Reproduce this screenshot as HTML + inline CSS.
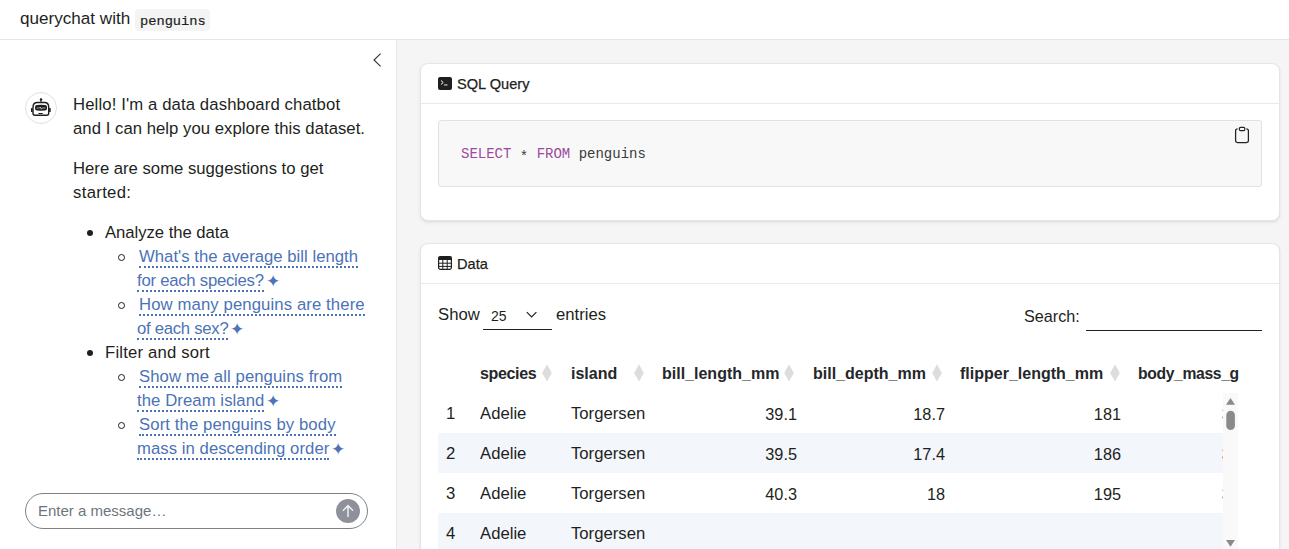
<!DOCTYPE html>
<html><head><meta charset="utf-8">
<style>
*{box-sizing:border-box;margin:0;padding:0}
html,body{width:1289px;height:549px;overflow:hidden;background:#fff;font-family:"Liberation Sans",sans-serif;color:#1d1f21}
.abs{position:absolute;white-space:nowrap}
#hdr{position:absolute;left:0;top:0;width:1289px;height:40px;border-bottom:1px solid #e4e6e8;background:#fff}
#side{position:absolute;left:0;top:40px;width:397px;height:509px;background:#fff;border-right:1px solid #e4e6e8}
#main{position:absolute;left:397px;top:40px;width:892px;height:509px;background:#f5f5f5}
.card{position:absolute;background:#fff;border:1px solid #e6e6e6;border-radius:8px;box-shadow:0 1px 2px rgba(0,0,0,.06),0 2px 4px rgba(0,0,0,.05)}
.t{font-size:16.7px;line-height:24px}
a.l{color:#4b73b6;text-decoration:none;border-bottom:2px dotted #4b73b6}
.spark{color:#4b73b6;font-size:16.5px;line-height:0;margin-left:2px;position:relative;top:1px}
.mono{font-family:"Liberation Mono",monospace}
.ch{font-size:14.6px;line-height:20px;-webkit-text-stroke:0.25px #1d1f21}
.th{font-size:16px;font-weight:bold;line-height:20px;color:#25272a}
.td{font-size:16.7px;line-height:20px}
.num{font-size:16.3px}
.sort{position:absolute;width:8px;height:16px}
.stripe{position:absolute;left:17px;width:785px;height:40px;background:#f3f6fb}
.r{text-align:right}
.inner{position:absolute;left:1px;top:1px;right:0;bottom:0}
</style></head><body>
<div id="hdr">
  <div class="abs" style="left:20px;top:9px;font-size:17.1px;line-height:20px">querychat with</div>
  <div class="abs" style="left:135px;top:9px;width:75px;height:22px;background:#f4f4f5;border-radius:4px"></div>
  <div class="abs mono" style="left:140px;top:12px;font-size:13.7px;line-height:20px;-webkit-text-stroke:0.2px #1d1f21">penguins</div>
</div>
<div id="side">
  <svg class="abs" style="left:370px;top:10px" width="14" height="20" viewBox="370 50 14 20"><path d="M380.6 53.6 L374 60 L380.6 66.4" fill="none" stroke="#333" stroke-width="1.1"/></svg>
  <div class="abs" style="left:25px;top:52px;width:32px;height:32px;border-radius:50%;border:1px solid #dde2e8"></div>
  <svg class="abs" style="left:28px;top:55px" width="26" height="25" viewBox="28 95 26 25">
    <circle cx="41" cy="99.4" r="1.25" fill="#1d1f21"/>
    <rect x="40.45" y="99.8" width="1.1" height="2.4" fill="#1d1f21"/>
    <path d="M33 107 Q33 102.5 37.5 102.5 L44.5 102.5 Q48.7 102.5 48.7 107 L48.7 113.3 Q48.7 115.3 46.7 115.3 L35 115.3 Q33 115.3 33 113.3 Z" fill="none" stroke="#1d1f21" stroke-width="1.4"/>
    <rect x="31" y="108.1" width="1.6" height="3.8" rx=".5" fill="#1d1f21"/>
    <rect x="49.1" y="108.1" width="1.6" height="3.8" rx=".5" fill="#1d1f21"/>
    <path d="M35 107 Q35 105 37 104.9 Q41 104.6 45 104.9 Q47 105 47 107 L47 108.4 Q47 110.4 45 110.5 Q41 110.8 37 110.5 Q35 110.4 35 108.4 Z" fill="#1d1f21"/>
    <path d="M36.5 108 L39.6 108 L40.4 107 L41.2 109.2 L42 108 L45.5 108" fill="none" stroke="#fff" stroke-width=".6"/>
    <rect x="38.3" y="112.9" width="4.6" height="1.1" rx=".5" fill="#1d1f21"/>
  </svg>
  <div class="abs t" style="left:73px;top:53px"><span style="letter-spacing:0.121px">Hello! I'm a data dashboard chatbot</span></div>
  <div class="abs t" style="left:73px;top:77px"><span style="letter-spacing:0.041px">and I can help you explore this dataset.</span></div>
  <div class="abs t" style="left:73px;top:117px"><span style="letter-spacing:-0.003px">Here are some suggestions to get</span></div>
  <div class="abs t" style="left:73px;top:141px"><span style="letter-spacing:0.329px">started:</span></div>
  <div class="abs" style="left:87px;top:190px;width:6px;height:6px;border-radius:50%;background:#1d1f21"></div>
  <div class="abs t" style="left:105px;top:181px"><span style="letter-spacing:-0.04px">Analyze the data</span></div>
  <div class="abs" style="left:118px;top:214px;width:7px;height:7px;border-radius:50%;border:1.2px solid #1d1f21"></div>
  <div class="abs t" style="left:139px;top:205px"><a class="l" style="letter-spacing:0.021px">What's the average bill length</a></div>
  <div class="abs t" style="left:137px;top:229px"><a class="l" style="letter-spacing:-0.238px">for each species?</a><span class="spark">✦</span></div>
  <div class="abs" style="left:118px;top:262px;width:7px;height:7px;border-radius:50%;border:1.2px solid #1d1f21"></div>
  <div class="abs t" style="left:139px;top:253px"><a class="l" style="letter-spacing:0.115px">How many penguins are there</a></div>
  <div class="abs t" style="left:137px;top:277px"><a class="l" style="letter-spacing:-0.264px">of each sex?</a><span class="spark">✦</span></div>
  <div class="abs" style="left:87px;top:310px;width:6px;height:6px;border-radius:50%;background:#1d1f21"></div>
  <div class="abs t" style="left:105px;top:301px"><span style="letter-spacing:0.193px">Filter and sort</span></div>
  <div class="abs" style="left:118px;top:334px;width:7px;height:7px;border-radius:50%;border:1.2px solid #1d1f21"></div>
  <div class="abs t" style="left:139px;top:325px"><a class="l" style="letter-spacing:0.083px">Show me all penguins from</a></div>
  <div class="abs t" style="left:137px;top:349px"><a class="l" style="letter-spacing:0.08px">the Dream island</a><span class="spark">✦</span></div>
  <div class="abs" style="left:118px;top:382px;width:7px;height:7px;border-radius:50%;border:1.2px solid #1d1f21"></div>
  <div class="abs t" style="left:139px;top:373px"><a class="l" style="letter-spacing:0.108px">Sort the penguins by body</a></div>
  <div class="abs t" style="left:137px;top:397px"><a class="l" style="letter-spacing:0.052px">mass in descending order</a><span class="spark">✦</span></div>
  <div class="abs" style="left:25px;top:453px;width:343px;height:36px;border:1px solid #7b8089;border-radius:18px"></div>
  <div class="abs t" style="left:38px;top:459px;color:#6c757d;font-size:15px">Enter a message…</div>
  <div class="abs" style="left:336px;top:459px;width:24px;height:24px;border-radius:50%;background:#8e9199"></div>
  <svg class="abs" style="left:336px;top:459px" width="24" height="24" viewBox="336 499 24 24"><path d="M348 517 L348 506 M342.9 510.8 L348 505.6 L353.1 510.8" fill="none" stroke="#eceef0" stroke-width="1.5"/></svg>
</div>
<div id="main">
  <!-- card 1 -->
  <div class="card" style="left:23px;top:23px;width:860px;height:158px"><div class="inner">
    <div class="abs" style="left:-1px;top:38px;width:858px;height:1px;background:#e8e9eb"></div>
    <svg class="abs" style="left:16px;top:12px" width="14" height="13" viewBox="0 0 14 13"><rect x="0" y="0" width="14" height="13" rx="2" fill="#1d1f21"/><path d="M3 3.5 L5.2 5.5 L3 7.5" fill="none" stroke="#fff" stroke-width="1"/><rect x="6" y="7.5" width="3.5" height="0.9" fill="#fff"/></svg>
    <div class="abs ch" style="left:35px;top:9px">SQL Query</div>
    <div class="abs" style="left:16px;top:55px;width:824px;height:67px;background:#f8f8f9;border:1px solid #dfe1e4;border-radius:3px"></div>
    <div class="abs mono" style="left:39px;top:80px;font-size:14px;line-height:18px;color:#3a3a3a"><span style="color:#9c4a9d">SELECT</span> <span style="position:relative;top:2.5px">*</span> <span style="color:#9c4a9d">FROM</span> penguins</div>
    <svg class="abs" style="left:808px;top:57px" width="24" height="24" viewBox="1230 122 24 24"><path d="M1237.6 128.9 Q1235.6 128.9 1235.6 131 L1235.6 140.6 Q1235.6 142.5 1237.5 142.5 L1246.5 142.5 Q1248.4 142.5 1248.4 140.6 L1248.4 131 Q1248.4 128.9 1246.4 128.9" fill="none" stroke="#222" stroke-width="1.25"/><rect x="1239.4" y="127.3" width="5.4" height="3.3" rx="1.2" fill="none" stroke="#222" stroke-width="1.2"/></svg>
  </div></div>
  <!-- card 2 -->
  <div class="card" style="left:23px;top:203px;width:860px;height:360px"><div class="inner">
    <div class="abs" style="left:-1px;top:38px;width:858px;height:1px;background:#e8e9eb"></div>
    <svg class="abs" style="left:16px;top:11px" width="14" height="14" viewBox="0 0 14 14"><rect x="0.6" y="0.6" width="12.8" height="12.8" rx="1.8" fill="none" stroke="#1d1f21" stroke-width="1.2"/><rect x="0.6" y="0.6" width="12.8" height="3.4" fill="#1d1f21"/><path d="M0.6 7.2 H13.4 M0.6 10.4 H13.4 M4.8 0.6 V13.4 M9.2 0.6 V13.4" stroke="#1d1f21" stroke-width="1"/></svg>
    <div class="abs ch" style="left:35px;top:9px">Data</div>
    <div class="abs td" style="left:16px;top:60px">Show</div>
    <div class="abs" style="left:61px;top:84px;width:69px;height:1px;background:#222"></div>
    <div class="abs" style="left:69px;top:62px;font-size:14px;line-height:18px">25</div>
    <svg class="abs" style="left:104px;top:66px" width="12" height="8" viewBox="0 0 12 8"><path d="M0.8 1.2 L5.6 6 L10.4 1.2" fill="none" stroke="#1d1f21" stroke-width="1.15"/></svg>
    <div class="abs td" style="left:134px;top:60px">entries</div>
    <div class="abs td" style="left:602px;top:61px;font-size:16.2px">Search:</div>
    <div class="abs" style="left:664px;top:85px;width:176px;height:1px;background:#222"></div>
    <!-- table header -->
    <div class="abs th" style="left:58px;top:119px;letter-spacing:-0.35px">species</div>
    <div class="abs th" style="left:149px;top:119px">island</div>
    <div class="abs th" style="left:240px;top:119px">bill_length_mm</div>
    <div class="abs th" style="left:391px;top:119px">bill_depth_mm</div>
    <div class="abs th" style="left:538px;top:119px">flipper_length_mm</div>
    <div class="abs th" style="left:716px;top:119px;font-size:15.7px;letter-spacing:-0.35px">body_mass_g</div>
    <svg class="abs" style="left:120.29999999999995px;top:118px" width="10" height="19" viewBox="0 0 10 19"><path d="M5 1.2 L9.8 9.9 L5 18.6 L0.2 9.9 Z" fill="#dddddd"/></svg>
    <svg class="abs" style="left:212px;top:118px" width="10" height="19" viewBox="0 0 10 19"><path d="M5 1.2 L9.8 9.9 L5 18.6 L0.2 9.9 Z" fill="#dddddd"/></svg>
    <svg class="abs" style="left:362px;top:118px" width="10" height="19" viewBox="0 0 10 19"><path d="M5 1.2 L9.8 9.9 L5 18.6 L0.2 9.9 Z" fill="#dddddd"/></svg>
    <svg class="abs" style="left:510px;top:118px" width="10" height="19" viewBox="0 0 10 19"><path d="M5 1.2 L9.8 9.9 L5 18.6 L0.2 9.9 Z" fill="#dddddd"/></svg>
    <svg class="abs" style="left:687.5px;top:118px" width="10" height="19" viewBox="0 0 10 19"><path d="M5 1.2 L9.8 9.9 L5 18.6 L0.2 9.9 Z" fill="#dddddd"/></svg>
    <div class="abs" style="left:801px;top:148px;width:15px;height:200px;background:#f9f9f9"></div>
    <svg class="abs" style="left:801px;top:148px" width="15" height="200" viewBox="0 0 15 200"><path d="M3 11.7 L7.5 5 L12 11.7 Z" fill="#8a8a8a"/><rect x="3.3" y="17.8" width="8.6" height="19.2" rx="4.3" fill="#8a8a8a"/><path d="M3 147 L12 147 L7.5 153.8 Z" fill="#8a8a8a"/></svg>
    <!-- body clip -->
    <div class="abs" style="left:16px;top:148px;width:785px;height:200px;overflow:hidden">
      <div class="stripe" style="left:0;top:40px"></div>
      <div class="stripe" style="left:0;top:120px"></div>
      <div class="abs td" style="left:8px;top:10.5px">1</div>
      <div class="abs td" style="left:42px;top:10.5px">Adelie</div>
      <div class="abs td" style="left:133px;top:10.5px">Torgersen</div>
      <div class="abs td num" style="right:426px;top:10.5px">39.1</div>
      <div class="abs td num" style="right:278px;top:10.5px">18.7</div>
      <div class="abs td num" style="right:102px;top:10.5px">181</div>
      <div class="abs td num" style="right:-35px;top:10.5px">3750</div>
      <div class="abs td" style="left:8px;top:50.5px">2</div>
      <div class="abs td" style="left:42px;top:50.5px">Adelie</div>
      <div class="abs td" style="left:133px;top:50.5px">Torgersen</div>
      <div class="abs td num" style="right:426px;top:50.5px">39.5</div>
      <div class="abs td num" style="right:278px;top:50.5px">17.4</div>
      <div class="abs td num" style="right:102px;top:50.5px">186</div>
      <div class="abs td num" style="right:-35px;top:50.5px">3800</div>
      <div class="abs td" style="left:8px;top:90.5px">3</div>
      <div class="abs td" style="left:42px;top:90.5px">Adelie</div>
      <div class="abs td" style="left:133px;top:90.5px">Torgersen</div>
      <div class="abs td num" style="right:426px;top:90.5px">40.3</div>
      <div class="abs td num" style="right:278px;top:90.5px">18</div>
      <div class="abs td num" style="right:102px;top:90.5px">195</div>
      <div class="abs td num" style="right:-35px;top:90.5px">3250</div>
      <div class="abs td" style="left:8px;top:130.5px">4</div>
      <div class="abs td" style="left:42px;top:130.5px">Adelie</div>
      <div class="abs td" style="left:133px;top:130.5px">Torgersen</div>
      <div class="abs td" style="left:8px;top:170.5px">5</div>
      <div class="abs td" style="left:42px;top:170.5px">Adelie</div>
      <div class="abs td" style="left:133px;top:170.5px">Torgersen</div>
      <div class="abs td num" style="right:426px;top:170.5px">36.7</div>
      <div class="abs td num" style="right:278px;top:170.5px">19.3</div>
      <div class="abs td num" style="right:102px;top:170.5px">193</div>
      <div class="abs td num" style="right:-35px;top:170.5px">3450</div>
    </div>
  </div></div>
</div>
</body></html>
